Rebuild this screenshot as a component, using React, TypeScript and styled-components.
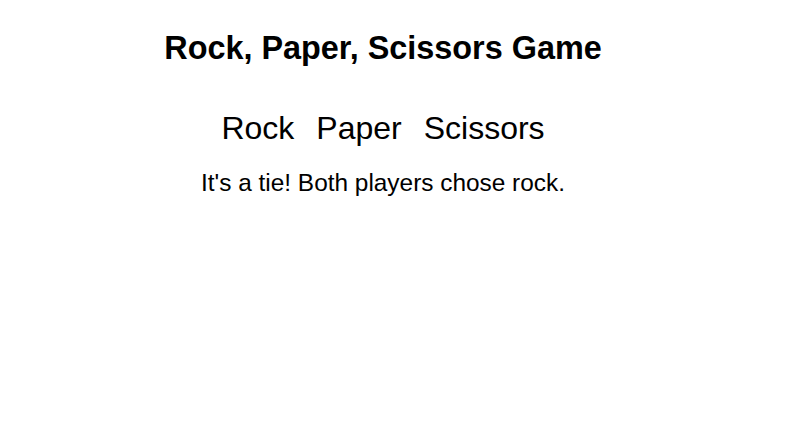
import { useState } from "react";
import styled, { createGlobalStyle } from "styled-components";

const GlobalStyle = createGlobalStyle`
  body {
    margin: 8px;
    background: #ffffff;
    font-family: "Liberation Sans", Arial, sans-serif;
    color: #000000;
  }
`;

const Game = styled.div`
  width: 750px;
  display: flex;
  flex-direction: column;
  align-items: center;
`;

const Title = styled.h1`
  margin: 22px 0 0;
  font-size: 32.4px;
  font-weight: bold;
`;

const Choices = styled.div`
  display: flex;
  gap: 6px;
  margin-top: 43px;
`;

const ChoiceButton = styled.button`
  border: none;
  background: transparent;
  padding: 0 8px;
  font-family: inherit;
  font-size: 32px;
  color: #000000;
  cursor: pointer;
`;

const Result = styled.p`
  margin: 22px 0 0;
  font-size: 24.4px;
`;

type Choice = "rock" | "paper" | "scissors";

const CHOICES: { id: Choice; label: string }[] = [
  { id: "rock", label: "Rock" },
  { id: "paper", label: "Paper" },
  { id: "scissors", label: "Scissors" },
];

const beats: Record<Choice, Choice> = {
  rock: "scissors",
  paper: "rock",
  scissors: "paper",
};

export default function App() {
  const [result, setResult] = useState("It's a tie! Both players chose rock.");

  const play = (player: Choice) => {
    const computer = CHOICES[Math.floor(Math.random() * 3)].id;
    if (player === computer) {
      setResult(`It's a tie! Both players chose ${player}.`);
    } else if (beats[player] === computer) {
      setResult(`You win! ${player} beats ${computer}.`);
    } else {
      setResult(`You lose! ${computer} beats ${player}.`);
    }
  };

  return (
    <>
      <GlobalStyle />
      <Game>
        <Title>Rock, Paper, Scissors Game</Title>
        <Choices>
          {CHOICES.map((c) => (
            <ChoiceButton key={c.id} onClick={() => play(c.id)}>
              {c.label}
            </ChoiceButton>
          ))}
        </Choices>
        <Result>{result}</Result>
      </Game>
    </>
  );
}
